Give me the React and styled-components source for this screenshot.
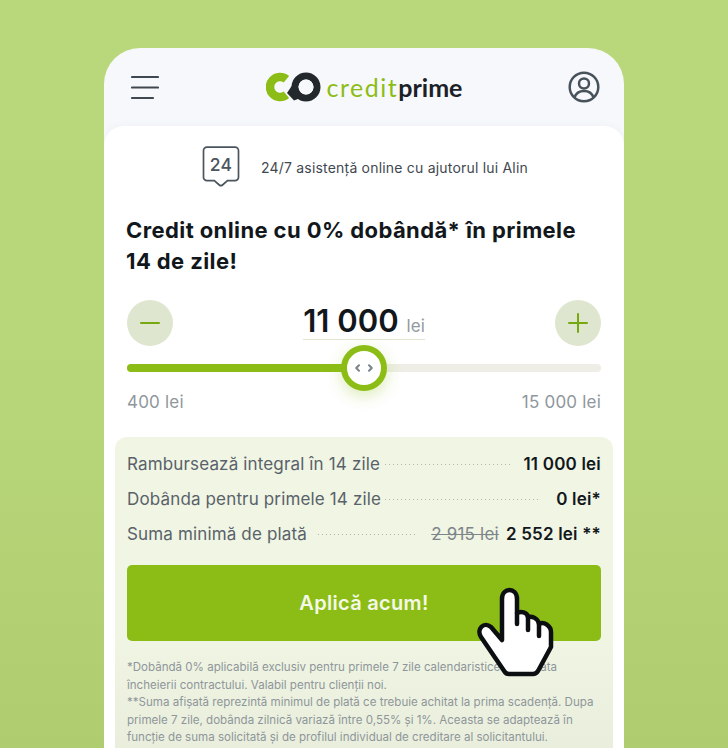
import React from 'react';
import styled, { createGlobalStyle } from 'styled-components';

const GlobalStyle = createGlobalStyle`
  html, body { margin: 0; padding: 0; }
  body { font-family: Inter, "Liberation Sans", sans-serif; }
`;

const Page = styled.div`
  width: 728px;
  height: 748px;
  box-sizing: border-box;
  padding: 48px 104px 0;
  overflow: hidden;
  background: linear-gradient(#b9d87c, #b7d679 55%, #afcd6e);
`;

const Phone = styled.div`
  position: relative;
  height: 700px;
  border-radius: 36px 36px 0 0;
  background: #f7f8fc;
  overflow: hidden;
`;

const Header = styled.header`
  height: 78px;
  box-sizing: border-box;
  padding: 0 24px 0 27px;
  display: flex;
  align-items: center;
  justify-content: space-between;
`;

const Logo = styled.div`
  display: flex;
  align-items: center;
  gap: 5px;
  margin-left: 1px;
`;

const LogoWord = styled.span`
  font-family: Lato, Inter, sans-serif;
  font-size: 25px;
  letter-spacing: ${p => (p.$bold ? '0' : '1.5px')};
  line-height: 30px;
  font-weight: ${p => (p.$bold ? 700 : 400)};
  color: ${p => (p.$bold ? '#1b2127' : '#8cbd16')};
`;

const Sheet = styled.section`
  height: 622px;
  box-sizing: border-box;
  padding-top: 18px;
  background: #fff;
  border-radius: 20px 20px 0 0;
  box-shadow: 0 -2px 6px rgba(60, 70, 90, 0.03);
`;

const Support = styled.div`
  display: flex;
  justify-content: center;
  align-items: center;
  gap: 21px;
  height: 46px;
  padding-left: 2px;
  font-size: 14px;
  letter-spacing: 0.2px;
  color: #3f4850;
`;

const Title = styled.h1`
  margin: 25px 22px 0;
  font-size: 22px;
  line-height: 31px;
  font-weight: 700;
  color: #12171c;
  letter-spacing: 0.4px;
`;

const Amount = styled.div`
  margin: 23px 23px 0;
  height: 46px;
  display: flex;
  align-items: center;
  justify-content: space-between;
`;

const RoundBtn = styled.button`
  width: 46px;
  height: 46px;
  padding: 0;
  border: 0;
  border-radius: 50%;
  background: #dfe6cf;
  display: flex;
  align-items: center;
  justify-content: center;
`;

const Value = styled.div`
  display: flex;
  align-items: baseline;
  gap: 8px;
  height: 39px;
  box-sizing: border-box;
  border-bottom: 1px solid #dfe6cf;
  margin-top: -6px;
`;

const ValueNum = styled.span`
  font-size: 31px;
  line-height: 40px;
  font-weight: 600;
  color: #12171c;
`;

const ValueUnit = styled.span`
  font-size: 17px;
  color: #939aa0;
`;

const Track = styled.div`
  position: relative;
  margin: 18px 23px 0;
  height: 8px;
  border-radius: 4px;
  background: #eeeee6;
`;

const TrackFill = styled.div`
  height: 100%;
  border-radius: 4px;
  background: #8cbd16;
`;

const Thumb = styled.div`
  position: absolute;
  top: 50%;
  width: 46px;
  height: 46px;
  box-sizing: border-box;
  transform: translate(-50%, -50%);
  border: 6px solid #8cbd16;
  border-radius: 50%;
  background: #fff;
  box-shadow: 0 5px 16px rgba(140, 189, 22, 0.3);
  display: flex;
  align-items: center;
  justify-content: center;
`;

const Range = styled.div`
  margin: 20px 23px 0;
  display: flex;
  justify-content: space-between;
  font-size: 17px;
  line-height: 20px;
  letter-spacing: 0.2px;
  color: #8f979d;
`;

const Summary = styled.div`
  margin: 25px 11px 0;
  padding: 9px 12px 0;
  height: 320px;
  box-sizing: border-box;
  border-radius: 12px 12px 0 0;
  background: linear-gradient(#f0f5e4, #f0f5e4 60%, #e9eedc);
`;

const Row = styled.div`
  height: 35px;
  display: flex;
  align-items: center;
`;

const RowLabel = styled.span`
  font-size: 17px;
  letter-spacing: 0.15px;
  color: #59626a;
  white-space: nowrap;
`;

const Dots = styled.span`
  flex: 1;
  height: 1px;
  margin: 2px ${p => p.$right}px 0 ${p => p.$left}px;
  background: linear-gradient(to right, #b0b6ab 1px, transparent 1px) 0 0 / 4px 1px repeat-x;
`;

const RowValue = styled.span`
  font-size: 17px;
  letter-spacing: 0.2px;
  font-weight: 600;
  color: #12171c;
  white-space: nowrap;
`;

const Struck = styled.s`
  font-size: 17px;
  letter-spacing: 0.2px;
  color: #7d858b;
  margin-right: 7px;
  white-space: nowrap;
`;

const Apply = styled.button`
  display: block;
  width: 100%;
  height: 76px;
  margin-top: 14px;
  border: 0;
  border-radius: 5px;
  background: #8cbd16;
  color: #f4f8e8;
  font-family: inherit;
  font-size: 20px;
  letter-spacing: 0.3px;
  font-weight: 600;
`;

const Note = styled.p`
  margin: 18px 0 0;
  font-size: 11.55px;
  line-height: 17.5px;
  color: #8f969b;
  white-space: pre-line;
`;

const HandIcon = styled.svg`
  position: absolute;
  left: 372px;
  top: 538px;
`;

const Menu = () => (
  <svg width="28" height="25" viewBox="0 0 28 25" fill="none" stroke="#3f4850" strokeWidth="2.2" strokeLinecap="round">
    <path d="M1 2h26M1 12.500h26M1 23h21" />
  </svg>
);

const User = () => (
  <svg width="32" height="32" viewBox="0 0 32 32" fill="none" stroke="#48525a" strokeWidth="2.5">
    <circle cx="16" cy="16" r="14.3" />
    <circle cx="16" cy="12.5" r="5" />
    <path d="M6.5 26.5c1.5-4.5 5-6.5 9.5-6.5s8 2 9.5 6.5" />
  </svg>
);

const Mark = () => (
  <svg width="56" height="30" viewBox="0 0 56 30">
    <path d="M20.400 7.300A10 10 0 1 0 20.400 22.700" fill="none" stroke="#8cbd16" strokeWidth="8.500" />
    <circle cx="40" cy="15" r="11" fill="none" stroke="#23282d" strokeWidth="7" />
    <path d="M21 21 29 9l8 16-9 3.500Z" fill="#23282d" />
    <circle cx="40" cy="15" r="7.500" fill="#f7f8fc" />
  </svg>
);

const Bubble = () => (
  <svg width="38" height="42" viewBox="0 0 38 42" fill="none">
    <path d="M5 1.2h28a3.5 3.5 0 0 1 3.5 3.5v26.5a3.5 3.5 0 0 1-3.5 3.5h-7.500l-5 4.300a2.500 2.500 0 0 1-3.200 0l-5-4.300H5a3.500 3.500 0 0 1-3.500-3.500V4.700A3.500 3.500 0 0 1 5 1.200Z" stroke="#4b555d" strokeWidth="1.700" />
    <text x="19" y="25" textAnchor="middle" fontFamily="Inter, sans-serif" fontSize="17.500" fontWeight="500" fill="#4b555d">24</text>
  </svg>
);

const Minus = () => (
  <svg width="20" height="20" viewBox="0 0 20 20" stroke="#76a80f" strokeWidth="2" strokeLinecap="round">
    <path d="M1 10h18" />
  </svg>
);

const Plus = () => (
  <svg width="20" height="20" viewBox="0 0 20 20" stroke="#76a80f" strokeWidth="2" strokeLinecap="round">
    <path d="M1 10h18M10 1v18" />
  </svg>
);

const Arrows = () => (
  <svg width="20" height="10" viewBox="0 0 20 10" fill="none" stroke="#7b858c" strokeWidth="2" strokeLinecap="round" strokeLinejoin="round">
    <path d="M5 2.200 2.200 5 5 7.800M15 2.200 17.800 5 15 7.800" />
  </svg>
);

const Hand = () => (
  <HandIcon width="80" height="95" viewBox="0 0 80 95">
    <path
      d="M26 54V13C26 1 41 1 41 13V27C45 25 51 26 52 31C56 30 62 32 63 38C68 35 75 40 75 46V61L62 85Q60 88 57 88H33Q30 88 28.500 85.500L5 51C0 43 8 35 15 41Z"
      fill="#fff"
      stroke="#0c0f12"
      strokeWidth="4.500"
      strokeLinejoin="round"
    />
    <path d="M41 27V38M52 31V44M63 38V50" fill="none" stroke="#0c0f12" strokeWidth="4.500" strokeLinecap="round" />
  </HandIcon>
);

const note = `*Dobândă 0% aplicabilă exclusiv pentru primele 7 zile calendaristice de la data
încheierii contractului. Valabil pentru clienții noi.
**Suma afișată reprezintă minimul de plată ce trebuie achitat la prima scadență. Dupa
primele 7 zile, dobânda zilnică variază între 0,55% și 1%. Aceasta se adaptează în
funcție de suma solicitată și de profilul individual de creditare al solicitantului.`;

export default function App() {
  const percent = (364 - 127) / 474 * 100;

  return (
    <Page>
      <GlobalStyle />
      <Phone>
        <Header>
          <Menu />
          <Logo>
            <Mark />
            <div>
              <LogoWord>credit</LogoWord>
              <LogoWord $bold>prime</LogoWord>
            </div>
          </Logo>
          <User />
        </Header>
        <Sheet>
          <Support>
            <Bubble />
            <span>24/7 asistență online cu ajutorul lui Alin</span>
          </Support>
          <Title>Credit online cu 0% dobândă* în primele<br />14 de zile!</Title>
          <Amount>
            <RoundBtn><Minus /></RoundBtn>
            <Value>
              <ValueNum>11 000</ValueNum>
              <ValueUnit>lei</ValueUnit>
            </Value>
            <RoundBtn><Plus /></RoundBtn>
          </Amount>
          <Track>
            <TrackFill style={{ width: `${percent}%` }} />
            <Thumb style={{ left: `${percent}%` }}><Arrows /></Thumb>
          </Track>
          <Range>
            <span>400 lei</span>
            <span>15 000 lei</span>
          </Range>
          <Summary>
            <Row>
              <RowLabel>Rambursează integral în 14 zile</RowLabel>
              <Dots $left={5} $right={11} />
              <RowValue>11 000 lei</RowValue>
            </Row>
            <Row>
              <RowLabel>Dobânda pentru primele 14 zile</RowLabel>
              <Dots $left={4} $right={16} />
              <RowValue>0 lei*</RowValue>
            </Row>
            <Row>
              <RowLabel>Suma minimă de plată</RowLabel>
              <Dots $left={11} $right={13} />
              <Struck>2 915 lei</Struck>
              <RowValue>2 552 lei **</RowValue>
            </Row>
            <Apply>Aplică acum!</Apply>
            <Note>{note}</Note>
          </Summary>
        </Sheet>
        <Hand />
      </Phone>
    </Page>
  );
}
